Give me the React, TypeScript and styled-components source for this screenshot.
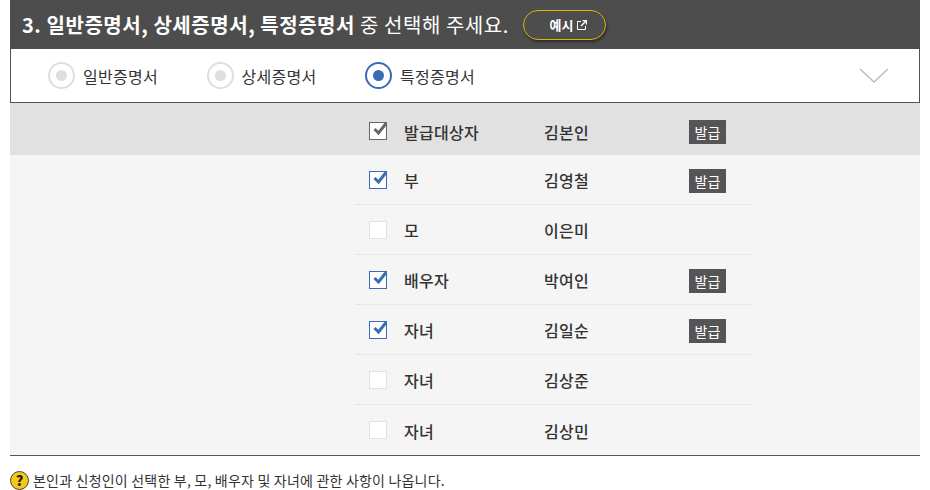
import React from "react";
import styled, { createGlobalStyle } from "styled-components";

const GlobalStyle = createGlobalStyle`
    html, body {
        margin: 0;
        padding: 0;
        background: #fff;
    }
    body {
        font-family: "Noto Sans CJK KR", "Noto Sans", sans-serif;
        color: #333;
    }
`;

const Page = styled.div`
    width: 910px;
    height: 490px;
    margin-left: 10px;
    overflow: hidden;
`;

const Header = styled.div`
    height: 49px;
    background: #4d4d4d;
    display: flex;
    align-items: center;
    padding-left: 12px;
    color: #fff;
`;

const Title = styled.h3`
    margin: 0;
    font-size: 20px;
    font-weight: 400;
    letter-spacing: 0.55px;
    line-height: 49px;
    white-space: nowrap;

    b {
        font-weight: 700;
    }
`;

const SampleButton = styled.button`
    margin-left: 14px;
    width: 83px;
    height: 30px;
    box-sizing: border-box;
    border: 1px solid #e6b400;
    border-radius: 15px;
    background: #4d4d4d;
    box-shadow: 1px 2px 3px rgba(0, 0, 0, 0.45);
    color: #fff;
    font-family: inherit;
    font-size: 13px;
    font-weight: 700;
    display: flex;
    align-items: center;
    justify-content: center;
    gap: 4px;
    padding: 0 0 0 8px;

    svg {
        display: block;
    }
`;

const RadioBar = styled.div`
    height: 54px;
    box-sizing: border-box;
    border: 1px solid #555;
    border-top: none;
    display: flex;
    align-items: center;
    justify-content: space-between;
    padding: 0 30px 0 37px;
`;

const RadioGroup = styled.div`
    display: flex;
    align-items: center;
`;

const RadioItem = styled.label`
    display: flex;
    align-items: center;
    width: 158.5px;
    gap: 8px;
    font-size: 16px;
    letter-spacing: 0.3px;
    color: #333;
`;

const RadioMark = styled.span<{ $on?: boolean }>`
    width: 27px;
    height: 27px;
    box-sizing: border-box;
    border-radius: 50%;
    border: 2px solid ${(p) => (p.$on ? "#3a6cb5" : "#dedede")};
    background: #fff;
    display: flex;
    align-items: center;
    justify-content: center;

    &::after {
        content: "";
        width: 11px;
        height: 11px;
        border-radius: 50%;
        background: ${(p) => (p.$on ? "#3a6cb5" : "#dedede")};
    }
`;

const ListArea = styled.div`
    height: 353px;
    box-sizing: border-box;
    background: #f5f5f5;
    border-bottom: 1px solid #555;
    position: relative;
`;

const Row = styled.div<{ $head?: boolean }>`
    height: ${(p) => (p.$head ? "52px" : "50px")};
    box-sizing: border-box;
    background: ${(p) => (p.$head ? "#e1e1e1" : "transparent")};
    padding-left: 346px;
    padding-top: ${(p) => (p.$head ? "4px" : "0")};
`;

const RowInner = styled.div<{ $line?: boolean }>`
    width: 396px;
    height: 100%;
    box-sizing: border-box;
    display: flex;
    align-items: center;
    padding-left: 13px;
    border-bottom: ${(p) => (p.$line ? "1px dotted #dcdcdc" : "none")};
`;

const Check = styled.span<{ $state: "off" | "on" | "fixed" }>`
    width: 18px;
    height: 18px;
    box-sizing: border-box;
    flex: none;
    background: #fff;
    border: 1px solid
        ${(p) => (p.$state === "on" ? "#3a6cb5" : p.$state === "fixed" ? "#666" : "#e2e2e2")};
    position: relative;

    svg {
        position: absolute;
        left: 2px;
        top: -2px;
    }
`;

const Relation = styled.span`
    width: 140px;
    margin-left: 17px;
    margin-top: 1px;
    font-size: 16px;
    font-weight: 500;
    letter-spacing: 0.3px;
    color: #333;
`;

const Name = styled.span`
    width: 145px;
    margin-top: 1px;
    font-size: 16px;
    font-weight: 500;
    letter-spacing: 0.3px;
    color: #333;
`;

const Badge = styled.span`
    width: 37px;
    height: 24px;
    margin-top: 2px;
    background: #555;
    color: #fff;
    font-size: 14px;
    display: flex;
    align-items: center;
    justify-content: center;
`;

const Notice = styled.p`
    margin: 14px 0 0;
    display: flex;
    align-items: center;
    gap: 4px;
    font-size: 14px;
    letter-spacing: 0.2px;
    color: #333;
    white-space: nowrap;
`;

const HelpIcon = styled.span`
    width: 19px;
    height: 19px;
    box-sizing: border-box;
    border-radius: 50%;
    border: 1.5px solid #444;
    background: #f6c915;
    color: #222;
    font-size: 14px;
    font-weight: 900;
    line-height: 1;
    display: flex;
    align-items: center;
    justify-content: center;
`;

const CheckGlyph = ({ color }: { color: string }) => (
    <svg width="16" height="15" viewBox="0 0 16 15" fill="none">
        <path d="M2.5 8 L6.5 12 L14 2.5" stroke={color} strokeWidth="3" />
    </svg>
);

type Person = {
    relation: string;
    name: string;
    state: "off" | "on" | "fixed";
};

const people: Person[] = [
    { relation: "발급대상자", name: "김본인", state: "fixed" },
    { relation: "부", name: "김영철", state: "on" },
    { relation: "모", name: "이은미", state: "off" },
    { relation: "배우자", name: "박여인", state: "on" },
    { relation: "자녀", name: "김일순", state: "on" },
    { relation: "자녀", name: "김상준", state: "off" },
    { relation: "자녀", name: "김상민", state: "off" },
];

export default function App() {
    return (
        <Page>
            <GlobalStyle />
            <Header>
                <Title>
                    <b>3. 일반증명서, 상세증명서, 특정증명서</b> 중 선택해 주세요.
                </Title>
                <SampleButton>
                    예시
                    <svg width="10" height="10" viewBox="0 0 10 10" fill="none" stroke="#fff">
                        <path d="M4 1.5 H0.5 V9.5 H8.5 V6" />
                        <path d="M5.5 0.5 H9.5 V4.5 M9 1 L4 6" strokeWidth="1.3" />
                    </svg>
                </SampleButton>
            </Header>
            <RadioBar>
                <RadioGroup>
                    <RadioItem>
                        <RadioMark />
                        일반증명서
                    </RadioItem>
                    <RadioItem>
                        <RadioMark />
                        상세증명서
                    </RadioItem>
                    <RadioItem>
                        <RadioMark $on />
                        특정증명서
                    </RadioItem>
                </RadioGroup>
                <svg width="30" height="16" viewBox="0 0 30 16" fill="none">
                    <path d="M1 1 L15 14 L29 1" stroke="#bdbdbd" strokeWidth="1.5" />
                </svg>
            </RadioBar>
            <ListArea>
                {people.map((p, i) => (
                    <Row key={i} $head={i === 0}>
                        <RowInner $line={i > 0 && i < people.length - 1}>
                            <Check $state={p.state}>
                                {p.state !== "off" && (
                                    <CheckGlyph color={p.state === "on" ? "#3a6cb5" : "#666"} />
                                )}
                            </Check>
                            <Relation>{p.relation}</Relation>
                            <Name>{p.name}</Name>
                            {p.state !== "off" && <Badge>발급</Badge>}
                        </RowInner>
                    </Row>
                ))}
            </ListArea>
            <Notice>
                <HelpIcon>?</HelpIcon>
                본인과 신청인이 선택한 부, 모, 배우자 및 자녀에 관한 사항이 나옵니다.
            </Notice>
        </Page>
    );
}
